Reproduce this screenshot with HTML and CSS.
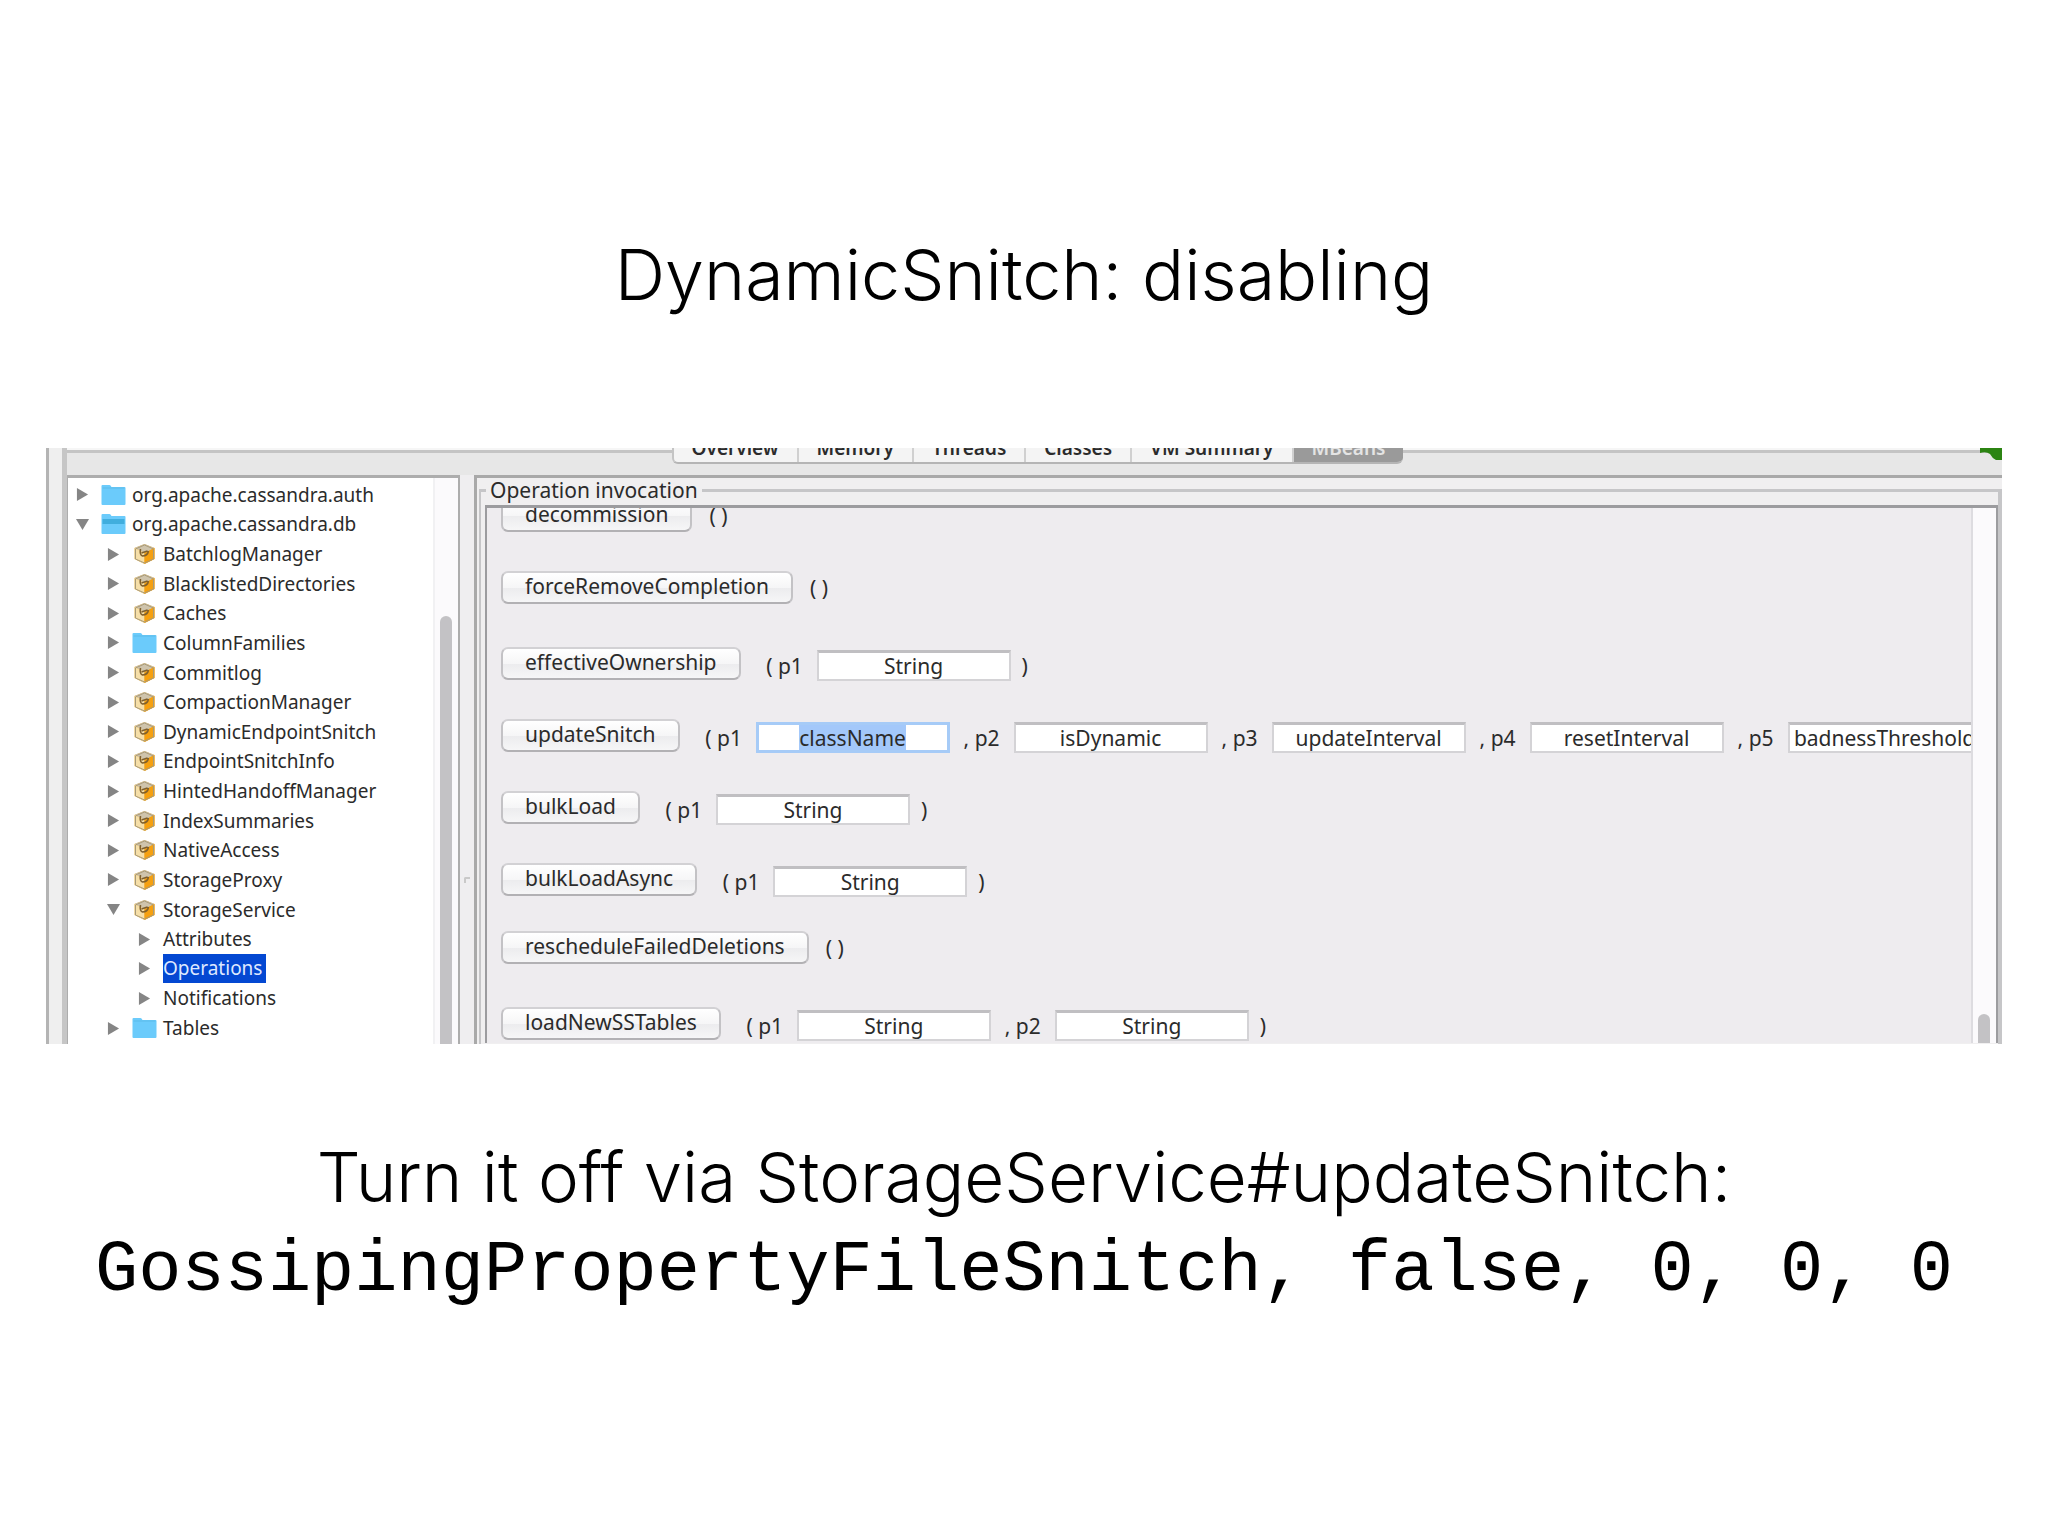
FILE: index.html
```
<!DOCTYPE html>
<html lang="en">
<head>
<meta charset="utf-8">
<title>DynamicSnitch: disabling</title>
<link rel="stylesheet" href="styles.css">
</head>
<body>
<svg width="0" height="0" class="defs" aria-hidden="true">
  <symbol id="right" viewBox="0 0 12 14"><path d="M0 0L12 7L0 14Z" fill="#858585"/></symbol>
  <symbol id="down" viewBox="0 0 14 12"><path d="M0 0H14L7 12Z" fill="#858585"/></symbol>
  <symbol id="folder" viewBox="0 0 24 20"><path d="M0 1Q0 0 1 0H8Q9 0 10 2H23Q24 2 24 3V19Q24 20 23 20H1Q0 20 0 19Z" fill="#6bcbfb"/><path d="M1 3H23" stroke="#5dbbe9" stroke-width="1"/></symbol>
  <symbol id="folder-open" viewBox="0 0 24 20"><path d="M0 1Q0 0 1 0H8Q9 0 10 2H23Q24 2 24 3V19Q24 20 23 20H1Q0 20 0 19Z" fill="#6bcbfb"/><path d="M1 5H23V10H1Z" fill="#41aede"/></symbol>
  <symbol id="bean" viewBox="0 0 22 20"><path d="M11 0L21 4V15L11 20L1 15V4Z" fill="#e0a83c"/><path d="M11 0L21 4L11 9L1 4Z" fill="#cfc4ac"/><path d="M1 4L11 9V20L1 15Z" fill="#f6dfa8"/><path d="M11 9L21 4V15L11 20Z" fill="#f5a010"/><path d="M11 1L20 5V15L11 19L2 15V5Z" fill="none" stroke="#a89a78" stroke-width="1"/><path d="M7 5Q6 11 9 12Q14 12 15 7M8 9L14 7" fill="none" stroke="#80602c" stroke-width="1.6"/></symbol>
</svg>
<main class="slide">
  <h1 class="title">DynamicSnitch: disabling</h1>

  <section class="console">
    <div class="body">
      <header class="tabbar">
        <nav class="tabs">
          <button class="tab">Overview</button>
          <button class="tab">Memory</button>
          <button class="tab">Threads</button>
          <button class="tab">Classes</button>
          <button class="tab">VM Summary</button>
          <button class="tab current">MBeans</button>
        </nav>
        <svg class="status" viewBox="0 0 22 12"><path d="M0 0H22V12H16Q12 10 10 6Q6 3 0 5Z" fill="#2c8413"/></svg>
      </header>
      <div class="panes">
        <div class="tree-pane">
          <ul class="tree">
            <li><svg class="arrow"><use href="#right"/></svg><svg class="icon"><use href="#folder"/></svg><span>org.apache.cassandra.auth</span></li>
            <li><svg class="arrow"><use href="#down"/></svg><svg class="icon"><use href="#folder-open"/></svg><span>org.apache.cassandra.db</span></li>
            <li class="child"><svg class="arrow"><use href="#right"/></svg><svg class="icon"><use href="#bean"/></svg><span>BatchlogManager</span></li>
            <li class="child"><svg class="arrow"><use href="#right"/></svg><svg class="icon"><use href="#bean"/></svg><span>BlacklistedDirectories</span></li>
            <li class="child"><svg class="arrow"><use href="#right"/></svg><svg class="icon"><use href="#bean"/></svg><span>Caches</span></li>
            <li class="child"><svg class="arrow"><use href="#right"/></svg><svg class="icon"><use href="#folder"/></svg><span>ColumnFamilies</span></li>
            <li class="child"><svg class="arrow"><use href="#right"/></svg><svg class="icon"><use href="#bean"/></svg><span>Commitlog</span></li>
            <li class="child"><svg class="arrow"><use href="#right"/></svg><svg class="icon"><use href="#bean"/></svg><span>CompactionManager</span></li>
            <li class="child"><svg class="arrow"><use href="#right"/></svg><svg class="icon"><use href="#bean"/></svg><span>DynamicEndpointSnitch</span></li>
            <li class="child"><svg class="arrow"><use href="#right"/></svg><svg class="icon"><use href="#bean"/></svg><span>EndpointSnitchInfo</span></li>
            <li class="child"><svg class="arrow"><use href="#right"/></svg><svg class="icon"><use href="#bean"/></svg><span>HintedHandoffManager</span></li>
            <li class="child"><svg class="arrow"><use href="#right"/></svg><svg class="icon"><use href="#bean"/></svg><span>IndexSummaries</span></li>
            <li class="child"><svg class="arrow"><use href="#right"/></svg><svg class="icon"><use href="#bean"/></svg><span>NativeAccess</span></li>
            <li class="child"><svg class="arrow"><use href="#right"/></svg><svg class="icon"><use href="#bean"/></svg><span>StorageProxy</span></li>
            <li class="child"><svg class="arrow"><use href="#down"/></svg><svg class="icon"><use href="#bean"/></svg><span>StorageService</span></li>
            <li class="leaf"><svg class="arrow"><use href="#right"/></svg><span>Attributes</span></li>
            <li class="leaf"><svg class="arrow"><use href="#right"/></svg><span class="selected">Operations</span></li>
            <li class="leaf"><svg class="arrow"><use href="#right"/></svg><span>Notifications</span></li>
            <li class="child"><svg class="arrow"><use href="#right"/></svg><svg class="icon"><use href="#folder"/></svg><span>Tables</span></li>
          </ul>
          <div class="track"><div class="thumb"></div></div>
        </div>
        <div class="splitter"><i class="grip"></i></div>
        <div class="detail">
          <fieldset class="group">
            <legend>Operation invocation</legend>
            <div class="scroll">
              <div class="operations">
                <div class="op"><button class="invoke">decommission</button><div class="none">( )</div></div>
                <div class="op"><button class="invoke">forceRemoveCompletion</button><div class="none">( )</div></div>
                <div class="op with-args"><button class="invoke">effectiveOwnership</button><div class="args"><label for="eo1">( p1</label><input id="eo1" value="String"><span class="close">)</span></div></div>
                <div class="op with-args"><button class="invoke">updateSnitch</button><div class="args"><label for="us1">( p1</label><input id="us1" class="active" value="className"><label for="us2">, p2</label><input id="us2" value="isDynamic"><label for="us3">, p3</label><input id="us3" value="updateInterval"><label for="us4">, p4</label><input id="us4" value="resetInterval"><label for="us5">, p5</label><input id="us5" value="badnessThreshold"></div></div>
                <div class="op with-args"><button class="invoke">bulkLoad</button><div class="args"><label for="bl1">( p1</label><input id="bl1" value="String"><span class="close">)</span></div></div>
                <div class="op with-args"><button class="invoke">bulkLoadAsync</button><div class="args"><label for="ba1">( p1</label><input id="ba1" value="String"><span class="close">)</span></div></div>
                <div class="op"><button class="invoke">rescheduleFailedDeletions</button><div class="none">( )</div></div>
                <div class="op with-args"><button class="invoke">loadNewSSTables</button><div class="args"><label for="ln1">( p1</label><input id="ln1" value="String"><label for="ln2">, p2</label><input id="ln2" value="String"><span class="close">)</span></div></div>
              </div>
              <div class="track wide"><div class="thumb"></div></div>
            </div>
          </fieldset>
        </div>
      </div>
    </div>
  </section>

  <p class="caption">Turn it off via StorageService#updateSnitch:<br><code>GossipingPropertyFileSnitch, false, 0, 0, 0</code></p>
</main>
<script src="script.js"></script>
</body>
</html>
```
FILE: script.js
```
const field = document.getElementById("us1");
field.focus({ preventScroll: true });
field.select();
```
FILE: styles.css
```
* { box-sizing: border-box; }
body { margin: 0; background: #fff; color: #000; }
.defs { position: absolute; }

.slide { padding: 231px 46px 0; }
.title {
  margin: 0 0 129px;
  font: 300 70px/88px Inter, "Liberation Sans", sans-serif;
  text-align: center;
}
.caption {
  margin: 89px 0 0;
  font: 300 69px/88px Inter, "Liberation Sans", sans-serif;
  text-align: center;
  white-space: nowrap;
}
.caption code { font: 400 72px/88px "Liberation Mono", monospace; }

/* Console window, cropped at top and bottom */
.console {
  display: flex;
  height: 596px;
  padding-left: 13px;
  overflow: hidden;
  border-left: 3px solid #b4b4b4;
  background: #efefef;
  color: #2b2b2b;
  font: 19px/24px "Noto Sans", sans-serif;
}
.console button, .console input { font: inherit; color: inherit; }
.body {
  flex: 1;
  min-width: 0;
  display: flex;
  flex-direction: column;
  border-left: 5px solid #c6c6c6;
  background: #e7e7e7;
}
.tabbar {
  position: relative;
  height: 27px;
  display: flex;
  justify-content: center;
  align-items: flex-start;
  padding-left: 6px;
  background: linear-gradient(#f6f6f6 2px, #c4c4c4 2px, #c4c4c4 5px, #e7e7e7 5px);
}
.tabs {
  display: flex;
  align-items: flex-end;
  height: 16px;
  overflow: hidden;
  border-bottom: 2px solid #b5b5b5;
  border-left: 2px solid #c4c4c4;
  border-radius: 0 0 6px 6px;
  background: #f4f4f4;
}
.console .tab {
  padding: 0 18px;
  border: 0;
  border-right: 2px solid #d0d0d0;
  background: none;
  font-weight: 600;
  line-height: 28px;
}
.console .tab.current { border: 0; background: #9a9a9a; color: #e4e4e4; }
.status { position: absolute; right: 0; top: 0; width: 22px; height: 12px; }

.panes { flex: 1; min-height: 0; display: flex; }
.tree-pane {
  width: 393px;
  display: flex;
  border: solid #adadad;
  border-width: 3px 2px 0 1px;
  background: #fff;
}
.tree {
  flex: 1;
  display: flex;
  flex-direction: column;
  margin: 0;
  padding: 2px 0 1px 8px;
  list-style: none;
}
.tree li { flex: 1; display: flex; align-items: center; }
.tree .child { padding-left: 31px; }
.tree .leaf { padding-left: 62px; }
.arrow { width: 13px; height: 13px; margin-right: 12px; }
.icon { width: 25px; height: 20px; margin-right: 6px; }
.tree .selected { padding: 2px 4px 3px 0; background: #0448d2; color: #dfe9ff; }
.track { width: 25px; padding: 138px 2px 0 0; border-left: 2px solid #f1f1f3; background: #fbfafc; }
.thumb { width: 12px; height: 100%; margin: 0 auto; border-radius: 6px 6px 0 0; background: #c3c2c5; }

.splitter { width: 14px; display: flex; align-items: center; justify-content: center; background: #efeef0; }
.grip { width: 6px; height: 6px; margin-top: 240px; border: solid #c9c9c9; border-width: 2px 0 0 2px; border-radius: 2px 0 0 0; }

.detail {
  flex: 1;
  min-width: 0;
  display: flex;
  padding-left: 2px;
  border-top: 3px solid #a9a9a9;
  border-left: 3px solid #a9a9a9;
  background: #f0eff0;
  font-size: 21px;
}
.group {
  flex: 1;
  min-width: 0;
  display: flex;
  margin: 0;
  padding: 3px 0 0 4px;
  border: solid #c6c6c8;
  border-width: 3px 4px 0 2px;
}
.group legend { margin-left: 1px; padding: 0 4px; }
.scroll {
  flex: 1;
  min-width: 0;
  height: 538px;
  display: flex;
  overflow: hidden;
  border: solid #9c9c9f;
  border-width: 3px 2px 0 2px;
  background: #eeecef;
}
.operations { flex: 1; min-width: 0; margin-top: -29px; padding-left: 14px; overflow: hidden; }
.op { display: flex; align-items: center; height: 72px; }
.with-args { padding-top: 8px; }
.console .invoke {
  flex: none;
  height: 33px;
  padding: 0 22px 2px;
  border: 2px solid #c3c2c5;
  border-top-color: #d2d1d4;
  border-bottom-color: #b2b1b4;
  border-radius: 7px;
  background: linear-gradient(#fff, #f6f6f7 50%, #ececee 52%, #f6f6f7);
  line-height: 24px;
}
.none { padding: 2px 0 0 17px; }
.args { flex: none; display: flex; align-items: center; padding: 5px 0 0 12px; }
.args label { width: 64px; text-align: center; white-space: pre; }
.args input {
  width: 194px;
  height: 31px;
  padding: 0;
  border: 2px solid #d4d3d6;
  border-top: 3px solid #c0bfc2;
  background: #fff;
  text-align: center;
}
.console .args .active { border: 3px solid #a6cbf7; outline: 0; }
.args .active::selection { background: #a3c8fa; color: #2b2b2b; }
.close { padding-left: 11px; }
.track.wide { width: 25px; padding-top: 506px; border-color: #dddce0; }
```
